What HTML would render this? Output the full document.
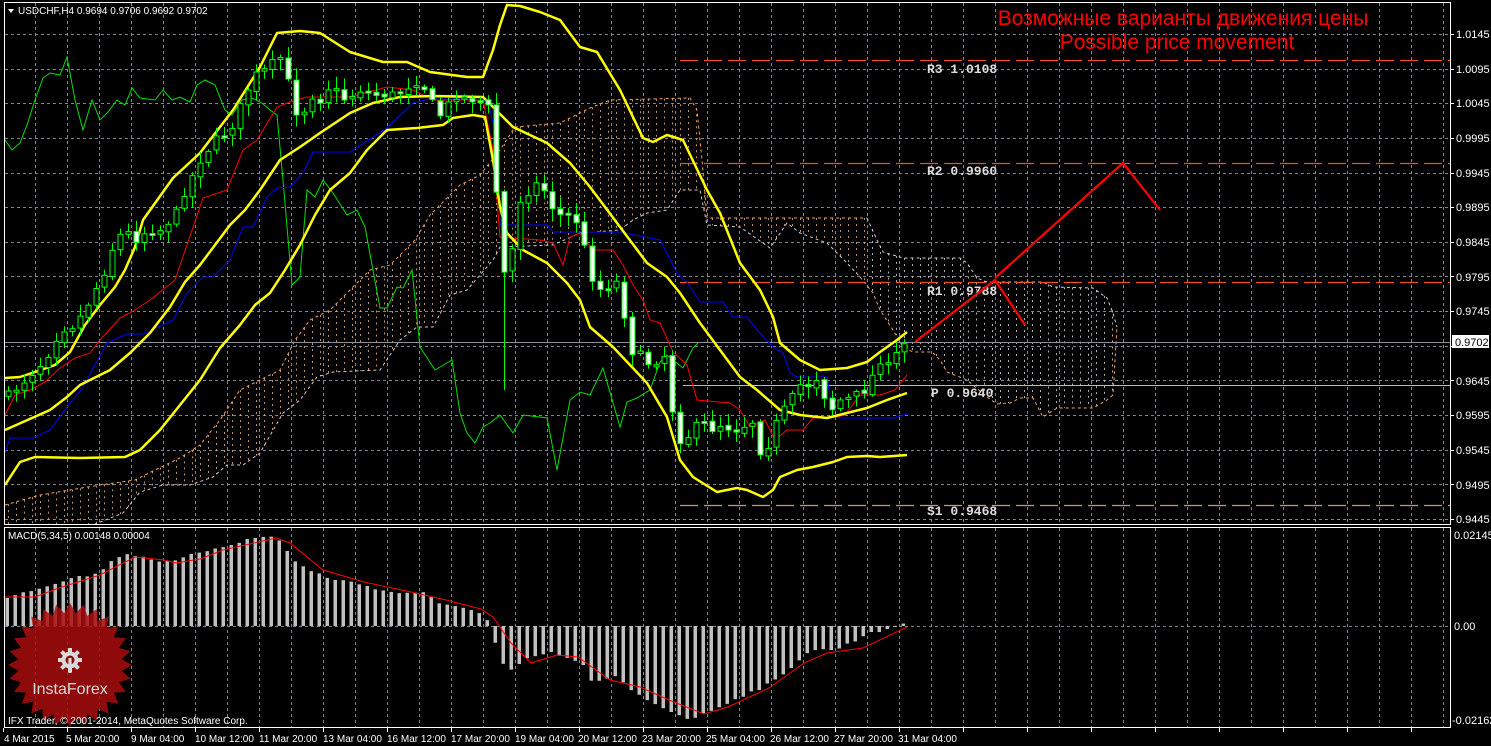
<!DOCTYPE html>
<html><head><meta charset="utf-8">
<style>
html,body{margin:0;padding:0;background:#000;}
body{width:1491px;height:746px;overflow:hidden;position:relative;font-family:"Liberation Sans",sans-serif;}
svg{position:absolute;left:0;top:0;}
.ax{font-family:"Liberation Sans",sans-serif;font-size:11px;fill:#fff;}
.bx{font-family:"Liberation Sans",sans-serif;font-size:10px;fill:#fff;}
.lv{font-family:"Liberation Mono",monospace;font-size:13px;font-weight:bold;fill:#ddd;}
</style></head>
<body>
<svg id="s" width="1491" height="746" viewBox="0 0 1491 746" xmlns="http://www.w3.org/2000/svg">
<defs><clipPath id="mc"><rect x="5" y="3" width="1445" height="521"/></clipPath></defs>
<rect width="1491" height="746" fill="#000"/>
<g id="grid" stroke="#7f8791" stroke-width="1" stroke-dasharray="3,3"></g>
<g id="cloud" clip-path="url(#mc)"></g>
<g id="levels">
<line x1="680" y1="60.5" x2="1450" y2="60.5" stroke="#f0501e" stroke-width="1.3" stroke-dasharray="18,6"/>
<line x1="680" y1="163.5" x2="1450" y2="163.5" stroke="#f0501e" stroke-width="1.3" stroke-dasharray="18,6"/>
<line x1="680" y1="282.5" x2="1450" y2="282.5" stroke="#f0501e" stroke-width="1.3" stroke-dasharray="18,6"/>
<line x1="683" y1="385.5" x2="1450" y2="385.5" stroke="#e6c800" stroke-width="1"/>
<line x1="680" y1="505.5" x2="1450" y2="505.5" stroke="#e0907a" stroke-width="1.3" stroke-dasharray="18,6"/>
<line x1="4" y1="342.5" x2="1450" y2="342.5" stroke="#8a929c" stroke-width="1"/>
</g>
<g id="lines" fill="none" clip-path="url(#mc)"></g>
<g id="candles"></g>
<g id="macd"></g>
<g opacity="0.85">
<polygon id="star" fill="#a80c0c"/>
<g fill="#fff" transform="translate(70,660)">
<circle cx="0" cy="0" r="8.5"/>
<rect x="-2" y="-12" width="4" height="24"/>
<rect x="-12" y="-2" width="24" height="4"/>
<rect x="-2" y="-12" width="4" height="24" transform="rotate(45)"/>
<rect x="-2" y="-12" width="4" height="24" transform="rotate(-45)"/>
<circle cx="0" cy="0" r="4.5" fill="#a80c0c"/>
<rect x="-1.6" y="-2" width="3.2" height="15" fill="#fff"/>
</g>
<text x="70" y="694" text-anchor="middle" font-family="Liberation Sans,sans-serif" font-size="16" fill="#fff">InstaForex</text>
</g>
<rect x="4.5" y="2.5" width="1446" height="522" fill="none" stroke="#fff" stroke-width="1"/>
<rect x="4.5" y="527.5" width="1446" height="200" fill="none" stroke="#fff" stroke-width="1"/>
<g id="ticks" stroke="#fff"></g>
<polygon points="8,9 14,9 11,13" fill="#fff"/>
<text x="18" y="14" class="bx">USDCHF,H4  0.9694 0.9706 0.9692 0.9702</text>
<text x="1183" y="25" text-anchor="middle" font-family="Liberation Sans,sans-serif" font-size="21" fill="#f00">Возможные варианты движения цены</text>
<text x="1177" y="49" text-anchor="middle" font-family="Liberation Sans,sans-serif" font-size="21" fill="#f00">Possible price movement</text>
<text x="927" y="73" class="lv">R3 1.0108</text>
<text x="927" y="175" class="lv">R2 0.9960</text>
<text x="927" y="295" class="lv">R1 0.9788</text>
<text x="931" y="397" class="lv">P 0.9640</text>
<text x="927" y="515" class="lv">S1 0.9468</text>
<polyline points="915,342 995,280 1025,325" fill="none" stroke="#f00" stroke-width="2.2"/>
<polyline points="995,278 1123,163 1160,210" fill="none" stroke="#f00" stroke-width="2.2"/>
<text x="8" y="539" font-family="Liberation Sans,sans-serif" font-size="10" fill="#fff">MACD(5,34,5) 0.00148 0.00004</text>
<text x="8" y="724" font-family="Liberation Sans,sans-serif" font-size="10" fill="#fff">IFX Trader, © 2001-2014, MetaQuotes Software Corp.</text>
<g class="ax">
<text x="1456" y="38">1.0145</text>
<text x="1456" y="73">1.0095</text>
<text x="1456" y="107">1.0045</text>
<text x="1456" y="142">0.9995</text>
<text x="1456" y="177">0.9945</text>
<text x="1456" y="211">0.9895</text>
<text x="1456" y="246">0.9845</text>
<text x="1456" y="281">0.9795</text>
<text x="1456" y="315">0.9745</text>
<text x="1456" y="385">0.9645</text>
<text x="1456" y="419">0.9595</text>
<text x="1456" y="454">0.9545</text>
<text x="1456" y="489">0.9495</text>
<text x="1456" y="523">0.9445</text>
<text x="1454" y="539">0.02145</text>
<text x="1454" y="630">0.00</text>
<text x="1452" y="724">-0.02162</text>
</g>
<rect x="1452" y="335" width="37" height="13" fill="#fff"/>
<text x="1455" y="346" font-family="Liberation Sans,sans-serif" font-size="11" fill="#000">0.9702</text>
<g class="bx">
<text x="4" y="742">4 Mar 2015</text>
<text x="66" y="742">5 Mar 20:00</text>
<text x="131" y="742">9 Mar 04:00</text>
<text x="195" y="742">10 Mar 12:00</text>
<text x="259" y="742">11 Mar 20:00</text>
<text x="323" y="742">13 Mar 04:00</text>
<text x="387" y="742">16 Mar 12:00</text>
<text x="451" y="742">17 Mar 20:00</text>
<text x="515" y="742">19 Mar 04:00</text>
<text x="578" y="742">20 Mar 12:00</text>
<text x="642" y="742">23 Mar 20:00</text>
<text x="706" y="742">25 Mar 04:00</text>
<text x="770" y="742">26 Mar 12:00</text>
<text x="834" y="742">27 Mar 20:00</text>
<text x="898" y="742">31 Mar 04:00</text>
</g>
</svg>
<script>
(function(){
var NS="http://www.w3.org/2000/svg";
function el(p,t,a){var e=document.createElementNS(NS,t);for(var k in a)e.setAttribute(k,a[k]);p.appendChild(e);return e;}
function interp(pts,x){if(x<=pts[0][0])return pts[0][1];for(var i=1;i<pts.length;i++){if(x<=pts[i][0]){var a=pts[i-1],b=pts[i];return a[1]+(b[1]-a[1])*(x-a[0])/(b[0]-a[0]||1);}}return pts[pts.length-1][1];}
function ps(pts){return pts.map(function(p){return p[0]+","+p[1]}).join(" ");}
var seed=7;function rnd(){seed=(seed*16807)%2147483647;return seed/2147483647;}
var g=document.getElementById("grid");
for(var k=0;k<15;k++){var y=Math.round(34+34.64*k)+0.5;el(g,"line",{x1:5,y1:y,x2:1450,y2:y});}
for(var x=35;x<1450;x+=32){el(g,"line",{x1:x+0.5,y1:3,x2:x+0.5,y2:524});el(g,"line",{x1:x+0.5,y1:528,x2:x+0.5,y2:727});}
el(g,"line",{x1:5,y1:626.5,x2:1450,y2:626.5});
var tk=document.getElementById("ticks");
for(var k=0;k<15;k++){var y=Math.round(34+34.64*k)+0.5;el(tk,"line",{x1:1450,y1:y,x2:1454,y2:y});}
for(var x=3;x<1450;x+=64){el(tk,"line",{x1:x+0.5,y1:728,x2:x+0.5,y2:732});}
var U=[[5,505],[40,495],[100,485],[135,480],[155,470],[180,458],[200,445],[220,420],[240,390],[260,380],[280,370],[295,340],[310,320],[330,310],[350,290],[370,270],[390,265],[415,240],[430,215],[440,205],[460,185],[480,175],[500,150],[515,127],[560,123],[590,108],[610,100],[690,98],[697,110],[702,160],[707,218],[867,218],[877,240],[883,252],[903,258],[960,258],[967,263],[977,278],[987,282],[1043,282],[1053,287],[1093,288],[1107,298],[1113,313],[1117,327]];
var L=[[5,560],[123,513],[140,492],[163,485],[190,485],[213,477],[227,465],[243,465],[260,453],[283,413],[300,400],[317,377],[333,372],[380,370],[400,340],[417,327],[433,327],[450,295],[467,290],[493,260],[500,247],[553,245],[580,233],[620,230],[633,220],[647,213],[667,210],[680,190],[700,190],[707,225],[740,227],[770,248],[787,223],[800,233],[827,243],[847,263],[860,277],[873,293],[880,310],[893,330],[903,347],[913,352],[932,352],[940,360],[947,372],[967,380],[987,397],[997,404],[1010,403],[1020,398],[1033,398],[1043,417],[1057,408],[1093,408],[1107,400],[1113,395],[1117,327]];
var c=document.getElementById("cloud");
for(var x=8;x<=1114;x+=8){var a=interp(U,x),b=interp(L,x);var col=x<870?"#e8a878":"#d8ccd8";el(c,"line",{x1:x+0.5,y1:a,x2:x+0.5,y2:b,stroke:col,"stroke-width":1,"stroke-dasharray":"2,4",opacity:0.85});}
el(c,"polyline",{points:ps(U.filter(function(p){return p[0]<870})),fill:"none",stroke:"#f4a460","stroke-dasharray":"3,3"});
el(c,"polyline",{points:ps(U.filter(function(p){return p[0]>=867})),fill:"none",stroke:"#d8c8d8","stroke-dasharray":"3,3"});
el(c,"polyline",{points:ps(L.filter(function(p){return p[0]<870})),fill:"none",stroke:"#d8c8d8","stroke-dasharray":"3,3"});
el(c,"polyline",{points:ps(L.filter(function(p){return p[0]>=860})),fill:"none",stroke:"#f4a460","stroke-dasharray":"3,3"});
var ln=document.getElementById("lines");
var green=[[5,140],[12,150],[20,143],[27,125],[35,100],[43,78],[50,73],[60,75],[67,57],[75,100],[83,130],[92,100],[100,120],[108,112],[117,100],[125,105],[132,88],[140,98],[155,100],[163,90],[172,100],[180,97],[190,102],[197,85],[205,80],[215,85],[225,110],[232,115],[242,100],[252,98],[262,103],[270,110],[277,115],[283,180],[292,285],[300,277],[307,190],[315,197],[323,180],[333,193],[347,215],[357,210],[365,227],[380,308],[387,308],[397,287],[403,288],[412,270],[420,347],[435,370],[452,360],[460,413],[467,433],[475,443],[483,427],[490,423],[500,415],[513,433],[523,415],[540,417],[547,418],[557,470],[570,400],[580,392],[590,395],[603,368],[620,427],[627,402],[637,398],[650,390],[660,362],[667,355],[683,368],[693,348],[698,343]];
var red=[[5,415],[15,395],[30,390],[45,382],[60,368],[75,358],[90,353],[100,340],[120,318],[135,310],[150,300],[175,280],[203,198],[227,190],[243,150],[257,140],[277,107],[290,102],[307,97],[350,97],[387,87],[413,90],[433,100],[483,100],[493,150],[500,237],[540,240],[553,243],[563,265],[570,237],[580,233],[593,250],[613,250],[623,265],[633,285],[643,300],[650,320],[660,323],[673,352],[687,365],[697,400],[730,403],[740,410],[750,427],[765,420],[775,440],[787,430],[803,430],[813,418],[830,418],[845,415],[860,395],[880,395],[895,390],[907,375]];
var blue=[[5,453],[10,438],[33,438],[50,430],[67,407],[83,387],[107,343],[127,334],[143,334],[173,320],[187,293],[203,277],[213,277],[230,260],[243,227],[253,227],[267,197],[277,188],[290,187],[303,173],[313,152],[350,152],[387,128],[413,103],[433,98],[483,98],[490,110],[497,140],[500,225],[547,225],[553,232],[620,232],[660,240],[677,273],[687,282],[700,302],[723,302],[733,317],[747,317],[757,330],[773,347],[783,353],[790,373],[797,377],[827,377],[833,415],[840,418],[893,418],[907,414]];
var up=[[5,378],[20,377],[35,372],[55,365],[70,352],[85,325],[100,305],[115,287],[125,270],[135,247],[143,220],[173,178],[200,153],[233,110],[260,67],[277,33],[300,31],[320,33],[350,52],[383,62],[407,62],[430,72],[467,77],[483,77],[493,50],[500,25],[507,5],[520,6],[540,12],[560,20],[580,47],[597,52],[620,90],[643,138],[653,142],[667,135],[683,140],[707,190],[720,213],[740,263],[760,290],[773,317],[780,343],[800,360],[820,370],[847,368],[867,362],[880,352],[897,340],[907,332]];
var mid=[[5,430],[50,410],[67,397],[80,385],[110,370],[130,353],[150,333],[170,307],[185,282],[200,265],[215,245],[230,225],[245,210],[260,190],[280,160],[300,147],[320,133],[350,113],[373,103],[400,97],[433,96],[483,97],[493,107],[513,127],[547,143],[570,163],[590,187],[620,227],[647,263],[667,277],[680,293],[700,323],[720,350],[740,377],[757,390],[780,410],[800,415],[827,418],[847,413],[867,408],[887,400],[907,393]];
var lo=[[5,485],[20,462],[35,457],[80,458],[125,457],[140,450],[160,430],[180,405],[200,380],[220,348],[240,325],[255,305],[270,293],[285,270],[300,245],[315,215],[330,190],[350,173],[367,150],[387,130],[417,128],[443,125],[453,118],[473,115],[485,117],[493,160],[500,207],[507,233],[523,250],[547,263],[567,283],[580,300],[590,327],[613,347],[647,383],[667,417],[680,460],[693,477],[717,492],[737,488],[747,490],[763,497],[773,490],[780,477],[797,470],[813,467],[833,462],[847,457],[867,456],[880,457],[907,455]];
el(ln,"polyline",{points:ps(green),stroke:"#00e000","stroke-width":1});
el(ln,"polyline",{points:ps(blue),stroke:"#0000ff","stroke-width":1});
el(ln,"polyline",{points:ps(red),stroke:"#ff0000","stroke-width":1});
[up,mid,lo].forEach(function(p){el(ln,"polyline",{points:ps(p),stroke:"#ffff00","stroke-width":2.5,"stroke-linejoin":"round"});});
var C=[[8,395],[20,385],[35,370],[45,360],[60,330],[75,325],[90,300],[105,270],[115,240],[125,230],[135,240],[145,232],[160,230],[175,215],[185,190],[200,160],[215,140],[230,130],[245,95],[255,75],[265,70],[275,60],[285,55],[290,100],[300,120],[310,95],[320,100],[330,85],[345,100],[360,90],[375,95],[390,95],[400,92],[410,85],[420,80],[430,100],[440,115],[455,95],[465,98],[475,100],[485,102],[492,115],[498,230],[505,280],[513,245],[520,200],[530,190],[540,180],[550,205],[560,215],[570,215],[580,225],[588,270],[598,290],[610,285],[620,280],[628,350],[640,355],[650,365],[658,360],[665,355],[672,410],[680,440],[690,435],[700,420],[710,430],[720,425],[735,430],[745,425],[755,420],[763,470],[770,435],[780,415],[790,400],[800,385],[812,385],[820,372],[828,420],[835,400],[845,400],[855,395],[865,390],[870,380],[880,360],[890,368],[898,350],[905,343]];
var cg=document.getElementById("candles");
var prev=interp(C,0);
for(var x=8;x<=905;x+=8){
 var cl=interp(C,x)+(rnd()-0.5)*8;var op=prev+(rnd()-0.5)*3;
 var top=Math.min(op,cl),bot=Math.max(op,cl);if(bot-top<1.5){bot=top+2;}
 var hi=top-2-rnd()*10,lo2=bot+2+rnd()*10;
 if(x==504){lo2=Math.max(lo2,390);}
 el(cg,"line",{x1:x+0.5,y1:hi,x2:x+0.5,y2:lo2,stroke:"#00ff00","stroke-width":1});
 var bull=cl<op;
 el(cg,"rect",{x:x-2,y:top,width:5,height:bot-top,fill:bull?"#000":"#fff",stroke:"#00ff00","stroke-width":1});
 prev=cl;
}
var H=[[3,598],[59,582],[67,578],[94,575],[123,553],[135,555],[170,563],[200,552],[258,537],[276,537],[285,547],[293,560],[308,570],[329,578],[364,585],[393,593],[423,592],[440,605],[469,608],[484,615],[490,626],[499,657],[508,673],[516,667],[531,657],[552,653],[581,663],[593,683],[616,677],[634,693],[651,702],[675,713],[684,718],[698,717],[716,708],[739,697],[763,687],[780,678],[798,660],[810,650],[833,650],[851,643],[869,632],[892,629],[901,624],[908,620]];
var S=[[3,597],[35,597],[59,588],[100,575],[135,557],[164,560],[176,563],[200,559],[223,550],[276,538],[290,543],[323,570],[364,582],[411,592],[446,600],[481,609],[493,617],[511,643],[531,663],[557,655],[578,657],[610,680],[640,687],[669,700],[704,714],[728,707],[769,688],[804,663],[827,653],[863,648],[907,627]];
var mg=document.getElementById("macd");
for(var x=7;x<=908;x+=8){var v=interp(H,x)+(rnd()-0.5)*3;var y0=626,t=Math.min(v,y0),b=Math.max(v,y0);el(mg,"rect",{x:x-1.5,y:t,width:3.5,height:Math.max(b-t,1),fill:"#c0c0c0"});}
el(mg,"polyline",{points:ps(S),fill:"none",stroke:"#ff0000","stroke-width":1});
var pts=[],n=28;for(var i=0;i<2*n;i++){var r=i%2?52:62;var an=Math.PI*i/n;pts.push((70+r*Math.cos(an)).toFixed(1)+","+(665+r*Math.sin(an)).toFixed(1));}
document.getElementById("star").setAttribute("points",pts.join(" "));
})();
</script>
</body></html>
